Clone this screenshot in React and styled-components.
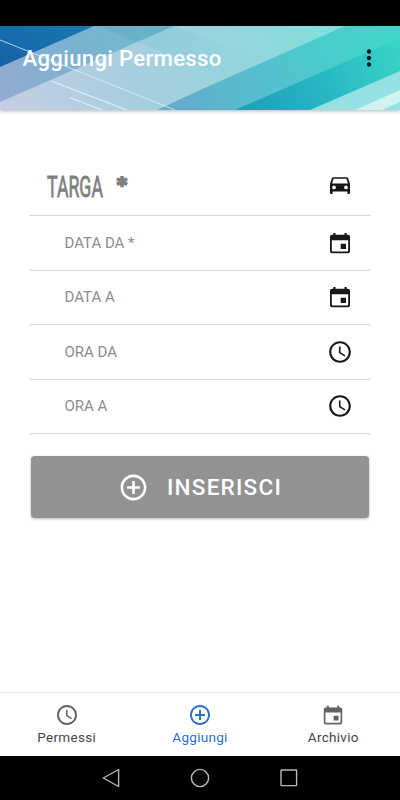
import React, { useState } from "react";
import { styled, createGlobalStyle } from "styled-components";
import { MdAccessTime, MdControlPoint, MdMoreVert } from "react-icons/md";

const CarIcon = () => (
  <svg width="26" height="26" viewBox="0 0 26 26" fill="currentColor">
    <path
      fillRule="evenodd"
      d="M6.2 2.3h13.6c.7 0 1.2.4 1.4 1L23 9v9.2c0 .4-.3.7-.7.7h-1.2c-.4 0-.7-.3-.7-.7v-1.6H5.6v1.6c0 .4-.3.7-.7.7H3.7c-.4 0-.7-.3-.7-.7V9l1.8-5.7c.2-.6.7-1 1.4-1zM6.5 3.8L5.1 8.6h15.800l-1.400-4.800zM7 10.500a1.900 1.900 0 1 0 0 3.800 1.900 1.900 0 1 0 0-3.800zM19 10.500a1.900 1.900 0 1 0 0 3.800 1.900 1.900 0 1 0 0-3.800z"
    />
  </svg>
);

const CalendarIcon = ({ size = 26 }) => (
  <svg width={size} height={size} viewBox="0 0 26 26" fill="currentColor">
    <path
      fillRule="evenodd"
      d="M6.300 3h2.200v1.800h9V3h2.200v1.800h1.300c1.100 0 2 .9 2 2v14.400c0 1.100-.9 2-2 2H5c-1.100 0-2-.9-2-2V6.800c0-1.100.9-2 2-2h1.300zM4.800 10.200v10.400c0 .5.300.8.800.8h14.800c.5 0 .8-.3.800-.8V10.200zM13.700 13.700h5.300v5.200h-5.300z"
    />
  </svg>
);

const fields = [
  { label: "DATA DA *", icon: CalendarIcon },
  { label: "DATA A", icon: CalendarIcon },
  { label: "ORA DA", icon: MdAccessTime },
  { label: "ORA A", icon: MdAccessTime },
];

const tabs = [
  { label: "Permessi", icon: MdAccessTime },
  { label: "Aggiungi", icon: MdControlPoint },
  { label: "Archivio", icon: CalendarIcon },
];

const HeaderArt = () => (
  <Art viewBox="0 26 400 84" preserveAspectRatio="none">
    <defs>
      <linearGradient id="dark" x1="0" y1="1" x2="1" y2="0">
        <stop offset="0" stopColor="#1860a5" />
        <stop offset="1" stopColor="#1879b1" />
      </linearGradient>
      <linearGradient id="mid" gradientUnits="userSpaceOnUse" x1="0" y1="90" x2="150" y2="30">
        <stop offset="0" stopColor="#93abd0" />
        <stop offset="0.5" stopColor="#7bb1d0" />
        <stop offset="1" stopColor="#72b8cf" />
      </linearGradient>
      <linearGradient id="pale" gradientUnits="userSpaceOnUse" x1="20" y1="120" x2="320" y2="0">
        <stop offset="0" stopColor="#c3cee4" />
        <stop offset="0.35" stopColor="#a8cee0" />
        <stop offset="0.7" stopColor="#97d5dd" />
        <stop offset="1" stopColor="#80dfd9" />
      </linearGradient>
      <linearGradient id="aqua" gradientUnits="userSpaceOnUse" x1="175" y1="110" x2="390" y2="26">
        <stop offset="0" stopColor="#64abca" />
        <stop offset="0.45" stopColor="#53c2ce" />
        <stop offset="1" stopColor="#40d7cb" />
      </linearGradient>
      <linearGradient id="teal" gradientUnits="userSpaceOnUse" x1="240" y1="110" x2="400" y2="45">
        <stop offset="0" stopColor="#229bba" />
        <stop offset="0.5" stopColor="#26b7c4" />
        <stop offset="1" stopColor="#38d5c5" />
      </linearGradient>
      <linearGradient id="shade" gradientUnits="userSpaceOnUse" x1="150" y1="40" x2="250" y2="80">
        <stop offset="0" stopColor="#6fbfd0" stopOpacity="0.3" />
        <stop offset="1" stopColor="#6fbfd0" stopOpacity="0" />
      </linearGradient>
    </defs>
    <rect x="0" y="26" width="400" height="84" fill="url(#pale)" />
    <polygon points="0,26 174,26 0,102" fill="url(#mid)" />
    <polygon points="0,26 94,26 0,67" fill="url(#dark)" />
    <polygon points="98,26 174,26 137,42" fill="#5aa9bf" opacity="0.4" />
    <polygon points="137,42 174,26 260,60 250,86" fill="url(#shade)" />
    <polygon points="157,110 200,90 345,26 400,26 400,110" fill="url(#aqua)" />
    <polygon points="235,110 400,38 400,110" fill="url(#teal)" />
    <polygon points="310,110 400,71 400,110" fill="#94e0e3" />
    <polygon points="355,110 400,90 400,102 382,110" fill="#d0f3f2" />
    <g stroke="#e0f0f8" strokeWidth="1.1">
      <path d="M0 40L175 110" opacity="0.75" />
      <path d="M51 81L127 110" />
      <path d="M70 97.5L102 110" />
    </g>
  </Art>
);

const App = () => {
  const [active, setActive] = useState("Aggiungi");

  return (
    <>
      <GlobalStyle />
      <Screen>
        <StatusBar />
        <Header>
          <HeaderArt />
          <Title>Aggiungi Permesso</Title>
          <MenuBtn type="button" aria-label="Menu">
            <MdMoreVert size={26} />
          </MenuBtn>
        </Header>

        <Content>
          <Field>
            <PlateLabel>
              <PlateText>TARGA</PlateText>
              <PlateStar>*</PlateStar>
            </PlateLabel>
            <CarIcon />
          </Field>
          {fields.map(({ label, icon: Icon }) => (
            <Field key={label}>
              <Label>{label}</Label>
              <Icon size={26} />
            </Field>
          ))}
          <SubmitBtn type="button">
            <MdControlPoint size={31} />
            <span>INSERISCI</span>
          </SubmitBtn>
        </Content>

        <TabBar>
          {tabs.map(({ label, icon: Icon }) => (
            <Tab
              key={label}
              type="button"
              $active={active === label}
              onClick={() => setActive(label)}
            >
              <Icon size={24} />
              <span>{label}</span>
            </Tab>
          ))}
        </TabBar>

        <SystemBar>
          <svg width="20" height="20" viewBox="0 0 20 20">
            <path d="M17.6 1.5V18.5L2.3 10Z" />
          </svg>
          <svg width="20" height="20" viewBox="0 0 20 20">
            <circle cx="10" cy="10" r="8.6" />
          </svg>
          <svg width="20" height="20" viewBox="0 0 20 20">
            <rect x="2" y="2" width="15.6" height="15.6" rx="0.5" />
          </svg>
        </SystemBar>
      </Screen>
    </>
  );
};

export default App;

const GlobalStyle = createGlobalStyle`
  * {
    box-sizing: border-box;
  }
  body {
    margin: 0;
    background: #fff;
    font-family: Roboto, "Liberation Sans", sans-serif;
  }
  button {
    font-family: inherit;
    border: none;
    padding: 0;
    background: transparent;
    cursor: pointer;
  }
`;
const Screen = styled.div`
  width: 400px;
  height: 800px;
  display: flex;
  flex-direction: column;
  background: #fff;
  overflow: hidden;
`;
const StatusBar = styled.div`
  height: 26px;
  flex-shrink: 0;
  background: #000;
`;
const Header = styled.header`
  position: relative;
  height: 84px;
  flex-shrink: 0;
  display: flex;
  align-items: center;
  justify-content: space-between;
  padding: 0 18px 20px 22.5px;
  box-shadow: 0 1px 4px rgba(0, 0, 0, 0.3);
`;
const Art = styled.svg`
  position: absolute;
  inset: 0;
  width: 100%;
  height: 100%;
`;
const Title = styled.h1`
  position: relative;
  margin: 0;
  color: #fff;
  font-size: 22.2px;
  font-weight: 500;
  letter-spacing: 0.28px;
  white-space: nowrap;
`;
const MenuBtn = styled.button`
  position: relative;
  display: flex;
  color: #0c1418;
`;
const Content = styled.main`
  flex: 1;
  padding: 51.5px 29px 0;
`;
const Field = styled.div`
  display: flex;
  align-items: center;
  justify-content: space-between;
  height: 54.5px;
  padding: 0 18px;
  border-bottom: 1px solid #d9d9d9;
  color: #17171b;
`;
const PlateLabel = styled.div`
  display: flex;
  align-items: flex-start;
  height: 40px;
  color: #7f7f7f;
`;
const PlateText = styled.span`
  width: 70px;
  font-size: 30px;
  font-weight: 400;
  line-height: 38px;
  transform: scaleX(0.59);
  transform-origin: left;
  -webkit-text-stroke: 0.8px #7f7f7f;
`;
const PlateStar = styled.span`
  font-family: "DejaVu Sans", sans-serif;
  font-size: 19px;
  font-weight: 700;
  line-height: 32px;
  -webkit-text-stroke: 2px #7f7f7f;
`;
const Label = styled.span`
  padding-left: 17.5px;
  font-size: 15px;
  color: #8c8c8c;
`;
const SubmitBtn = styled.button`
  display: flex;
  align-items: center;
  justify-content: center;
  gap: 18px;
  width: 338px;
  height: 62px;
  margin: 22px 2px 0;
  border-radius: 4px;
  background: #919294;
  box-shadow: 0 1px 3px rgba(0, 0, 0, 0.28);
  color: #fff;
  font-size: 22.5px;
  font-weight: 500;
  letter-spacing: 1.25px;
`;
const TabBar = styled.nav`
  display: grid;
  grid-template-columns: repeat(3, 1fr);
  height: 64px;
  flex-shrink: 0;
  border-top: 1px solid #ececec;
`;
const Tab = styled.button`
  display: flex;
  flex-direction: column;
  align-items: center;
  padding-top: 10px;
  gap: 2px;
  font-size: 13.5px;
  letter-spacing: 0.3px;
  line-height: 17px;
  color: ${(props) => (props.$active ? "#2b70cf" : "#454545")};

  svg {
    flex-shrink: 0;
    color: ${(props) => (props.$active ? "#2b70cf" : "#626262")};
  }
`;
const SystemBar = styled.div`
  display: flex;
  align-items: center;
  justify-content: center;
  gap: 69px;
  height: 44px;
  flex-shrink: 0;
  background: #000;

  svg {
    fill: none;
    stroke: #b8b8b8;
    stroke-width: 1.4;
    stroke-linejoin: round;
  }
`;
